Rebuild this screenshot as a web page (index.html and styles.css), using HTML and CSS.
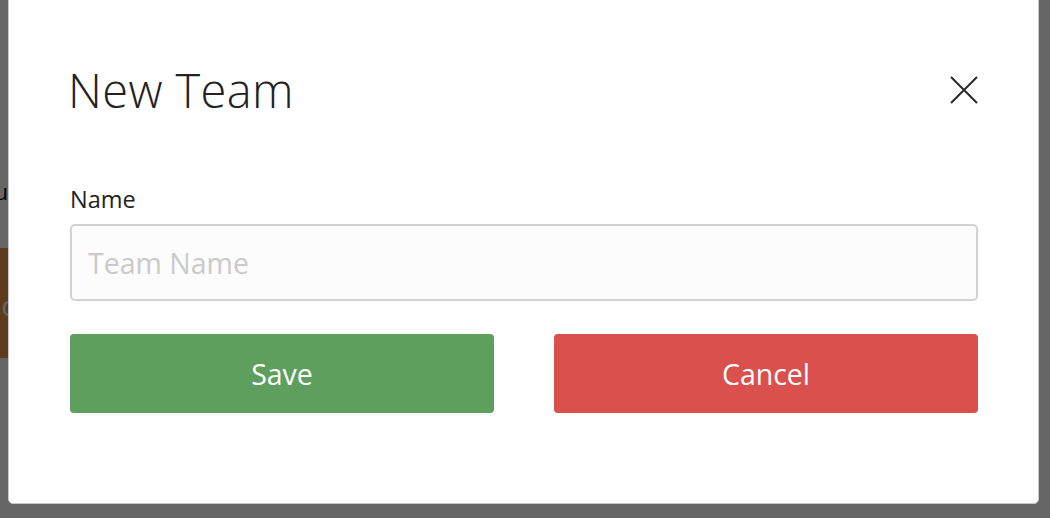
FILE: index.html
```html
<!DOCTYPE html>
<html>
<head>
<meta charset="utf-8">
<link rel="stylesheet" href="styles.css">
</head>
<body>
<div class="page">
  <div class="page-text">Teams you</div>
  <div class="page-card"><span class="card-text">Go</span></div>
</div>
<div class="backdrop"></div>
<div class="modal">
  <div class="modal-header">
    <h1 class="modal-title">New Team</h1>
    <button class="close" aria-label="Close">
      <svg width="28" height="28" viewBox="0 0 28 28"><path d="M1 1 L27 27 M27 1 L1 27" stroke="#2b2b2b" stroke-width="2" fill="none"/></svg>
    </button>
  </div>
  <div class="modal-body">
    <label class="field-label">Name</label>
    <input class="field-input" type="text" placeholder="Team Name">
    <div class="actions">
      <button class="btn btn-save">Save</button>
      <button class="btn btn-cancel">Cancel</button>
    </div>
  </div>
</div>
</body>
</html>
```
FILE: styles.css
```css
html, body {
  margin: 0;
  padding: 0;
  width: 1050px;
  height: 518px;
  overflow: hidden;
  background: #fff;
  font-family: "Open Sans", sans-serif;
}
.page {
  position: relative;
  height: 518px;
}
.page-text {
  position: absolute;
  left: -192px;
  width: 200px;
  text-align: right;
  top: 176px;
  font-size: 22px;
  color: #000;
  white-space: nowrap;
}
.page-card {
  position: absolute;
  left: -200px;
  top: 248px;
  width: 208px;
  height: 110px;
  background: #ec9449;
}
.card-text {
  position: absolute;
  right: -10px;
  top: 38px;
  font-size: 28px;
  color: #fff;
}
.backdrop {
  position: fixed;
  inset: 0;
  background: rgba(0, 0, 0, 0.6);
}
.modal {
  position: absolute;
  left: 8px;
  top: -10px;
  width: 1031px;
  height: 514px;
  box-sizing: border-box;
  background: #fff;
  border: 1px solid #c8c8cc;
  border-radius: 5px;
  padding: 0 60px 0 61px;
  display: flex;
  flex-direction: column;
}
.modal-header {
  display: flex;
  align-items: center;
  justify-content: space-between;
  padding-top: 75px;
  height: 48px;
}
.modal-title {
  margin: 0 0 0 -2px;
  font-family: "Open Sans", sans-serif;
  font-weight: 300;
  font-size: 47px;
  letter-spacing: 0.4px;
  color: #222;
  line-height: 48px;
}
.close {
  background: none;
  border: 0;
  padding: 0;
  margin-right: 0;
  width: 28px;
  height: 28px;
  cursor: pointer;
}
.close svg { display: block; }
.modal-body {
  display: flex;
  flex-direction: column;
  padding-top: 73px;
}
.field-label {
  font-family: "Open Sans", sans-serif;
  font-size: 23.5px;
  color: #222;
  line-height: 24px;
}
.field-input {
  margin-top: 13px;
  height: 77px;
  box-sizing: border-box;
  border: 2px solid #d2d2d2;
  border-radius: 5px;
  background: #fcfcfc;
  padding: 0 16px;
  font-family: "Open Sans", sans-serif;
  font-size: 28.5px;
  color: #222;
  outline: none;
}
.field-input::placeholder { color: #cacaca; }
.actions {
  margin-top: 33px;
  display: flex;
  justify-content: space-between;
  gap: 60px;
}
.btn {
  flex: 1;
  height: 79px;
  border: 0;
  border-radius: 4px;
  color: #fff;
  font-family: "Open Sans", sans-serif;
  font-size: 28.5px;
  cursor: pointer;
}
.btn-save { background: #5e9f5d; }
.btn-cancel { background: #d9504c; }
```
